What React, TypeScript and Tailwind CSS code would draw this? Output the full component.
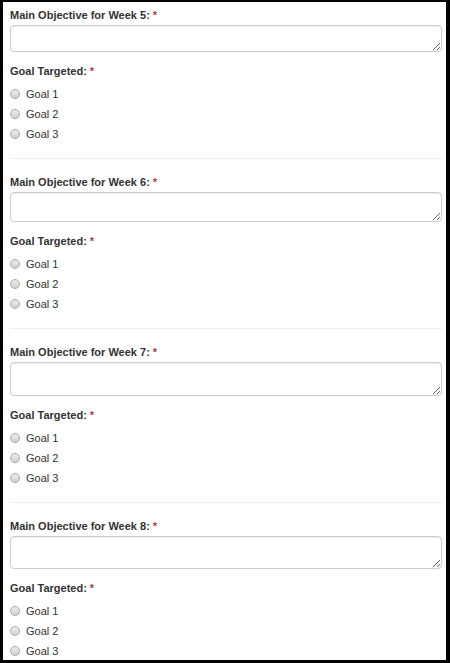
const weeks = [
  { n: 5, h: 'h-[27px]' },
  { n: 6, h: 'h-[30px]' },
  { n: 7, h: 'h-[34px]' },
  { n: 8, h: 'h-[33px]' },
]

const goals = ['Goal 1', 'Goal 2', 'Goal 3']

function Req() {
  return <span className="text-[#a94442]"> *</span>
}

function Radio({ label }: { label: string }) {
  return (
    <label className="flex items-center h-[20px] gap-[6px] text-[11px] text-[#333]">
      <span className="w-[10px] h-[10px] rounded-full border border-[#a9a9a9] bg-gradient-to-b from-[#ececec] to-[#d2d2d2]" />
      <span>{label}</span>
    </label>
  )
}

export default function App() {
  return (
    <div className="w-[450px] h-[663px] bg-black pl-[3px] pt-[2px] pr-[4px] pb-[3px]" style={{ fontFamily: '"Liberation Sans", Arial, sans-serif' }}>
      <div className="w-full h-full bg-white overflow-hidden pl-[7px] pr-[4px] pt-[5px]">
        {weeks.map((w, i) => (
          <div key={w.n}>
            <p className="h-[17px] leading-[17px] text-[11px] font-bold text-[#333]">
              Main Objective for Week {w.n}:<Req />
            </p>
            <textarea className={`mt-[1px] block w-full ${w.h} border border-[#ccc] rounded-[4px] bg-white shadow-[inset_0_1px_1px_rgba(0,0,0,0.075)]`} />
            <p className="mt-[11px] h-[17px] leading-[17px] text-[11px] font-bold text-[#333]">
              Goal Targeted:<Req />
            </p>
            <div className="mt-[4px] flex flex-col">
              {goals.map(g => <Radio key={g} label={g} />)}
            </div>
            {i < weeks.length - 1 && <div className="mt-[14px] mb-[15px] border-t border-[#eee]" />}
          </div>
        ))}
      </div>
    </div>
  )
}
